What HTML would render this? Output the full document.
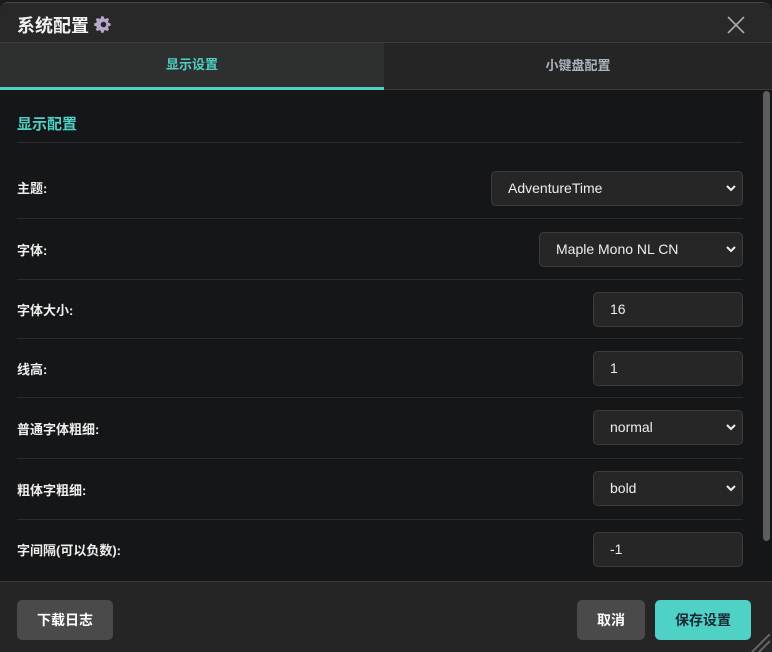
<!DOCTYPE html>
<html><head><meta charset="utf-8"><style>
*{box-sizing:border-box;margin:0;padding:0}
body{width:772px;height:652px;background:#1a1a1a;font-family:"Liberation Sans","Noto Sans CJK SC",sans-serif;overflow:hidden;position:relative;color:#e6e6e6}
.win{position:absolute;left:0;top:2px;width:772px;height:650px;background:#151618;border-radius:8px 10px 0 0;overflow:hidden;border-top:1px solid #444}
.hd{position:absolute;left:0;top:0;width:772px;height:40px;background:#282828;border-bottom:1px solid #3c3c3c}
.title{position:absolute;left:17px;top:9px;font-size:18px;font-weight:bold;color:#f2f2f2}
.tabs{position:absolute;top:40px;left:0;width:772px;height:47px;background:#252525;border-bottom:1px solid #3a3a3a}
.tab{position:absolute;top:0;height:47px;line-height:45px;text-align:center;font-size:13px;font-weight:bold}
.t1{left:0;width:384px;background:#2e302f;color:#4fd1c5;border-bottom:3px solid #4fd1c5;line-height:43px}
.t2{left:384px;width:388px;color:#aab3be}
.sec{position:absolute;left:17px;top:110px;font-size:15px;font-weight:bold;color:#4fd1c5}
.hr{position:absolute;left:17px;width:726px;height:1px;background:#2c2c2c}
.lbl{position:absolute;left:17px;font-size:13px;font-weight:bold;color:#eee}
.ctl{position:absolute;height:35px;background:#262626;border:1px solid #3c3c3c;border-radius:5px;font-size:14px;color:#eee;padding-left:16px;line-height:33px}
.ctl svg{position:absolute;right:6px;top:12px}
.sb{position:absolute;left:763px;top:88px;width:7px;height:450px;background:#5d5d5d;border-radius:4px}
.ft{position:absolute;left:0;top:578px;width:772px;height:72px;background:#252525;border-top:1px solid #3a3a3a}
.btn{position:absolute;top:18px;height:40px;border-radius:5px;font-size:14px;font-weight:bold;text-align:center;line-height:40px}
</style></head><body>
<div class="win">
<div class="hd"><div class="title">系统配置 <svg width="19" height="19" viewBox="0 0 24 24" style="vertical-align:-2px"><path fill="#b5a8c9" fill-rule="evenodd" d="M12 8.5a3.5 3.5 0 100 7 3.5 3.5 0 000-7zm9 5v-3l-2.6-.6a7 7 0 00-.8-1.9l1.4-2.3-2.1-2.1-2.3 1.4a7 7 0 00-1.9-.8L12.1 1.6h-3l-.6 2.6a7 7 0 00-1.9.8L4.3 3.6 2.2 5.7l1.4 2.3a7 7 0 00-.8 1.9l-2.6.6v3l2.6.6a7 7 0 00.8 1.9l-1.4 2.3 2.1 2.1 2.3-1.4a7 7 0 001.9.8l.6 2.6h3l.6-2.6a7 7 0 001.9-.8l2.3 1.4 2.1-2.1-1.4-2.3a7 7 0 00.8-1.9z"/></svg></div>
<svg style="position:absolute;left:727px;top:13px" width="18" height="18"><path d="M1 1L17 17M17 1L1 17" stroke="#aaa" stroke-width="1.6"/></svg></div>
<div class="tabs"><div class="tab t1">显示设置</div><div class="tab t2">小键盘配置</div></div>
<div class="sec">显示配置</div>
<div class="hr" style="top:139px"></div>
<div class="lbl" style="top:175px">主题:</div>
<div class="ctl" style="left:491px;top:168px;width:252px">AdventureTime<svg width="10" height="8"><path d="M1 2l4 4 4-4" stroke="#eee" stroke-width="2" fill="none"/></svg></div>
<div class="hr" style="top:215px"></div>
<div class="lbl" style="top:237px">字体:</div>
<div class="ctl" style="left:539px;top:229px;width:204px">Maple Mono NL CN<svg width="10" height="8"><path d="M1 2l4 4 4-4" stroke="#eee" stroke-width="2" fill="none"/></svg></div>
<div class="hr" style="top:276px"></div>
<div class="lbl" style="top:297px">字体大小:</div>
<div class="ctl" style="left:593px;top:289px;width:150px">16</div>
<div class="hr" style="top:335px"></div>
<div class="lbl" style="top:356px">线高:</div>
<div class="ctl" style="left:593px;top:348px;width:150px">1</div>
<div class="hr" style="top:394px"></div>
<div class="lbl" style="top:416px">普通字体粗细:</div>
<div class="ctl" style="left:593px;top:407px;width:150px">normal<svg width="10" height="8"><path d="M1 2l4 4 4-4" stroke="#eee" stroke-width="2" fill="none"/></svg></div>
<div class="hr" style="top:455px"></div>
<div class="lbl" style="top:477px">粗体字粗细:</div>
<div class="ctl" style="left:593px;top:468px;width:150px">bold<svg width="10" height="8"><path d="M1 2l4 4 4-4" stroke="#eee" stroke-width="2" fill="none"/></svg></div>
<div class="hr" style="top:516px"></div>
<div class="lbl" style="top:537px">字间隔(可以负数):</div>
<div class="ctl" style="left:593px;top:529px;width:150px">-1</div>
<div class="sb"></div>
<div class="ft">
<div class="btn" style="left:17px;width:96px;background:#4a4a4a;color:#fff">下载日志</div>
<div class="btn" style="left:577px;width:68px;background:#4a4a4a;color:#fff">取消</div>
<div class="btn" style="left:655px;width:96px;background:#4fd1c5;color:#1c2a33">保存设置</div>
<svg style="position:absolute;left:750px;top:52px" width="20" height="18"><path d="M2 18L20 0M9 18L20 7" stroke="#666" stroke-width="2"/></svg>
</div>
</div>
</body></html>
